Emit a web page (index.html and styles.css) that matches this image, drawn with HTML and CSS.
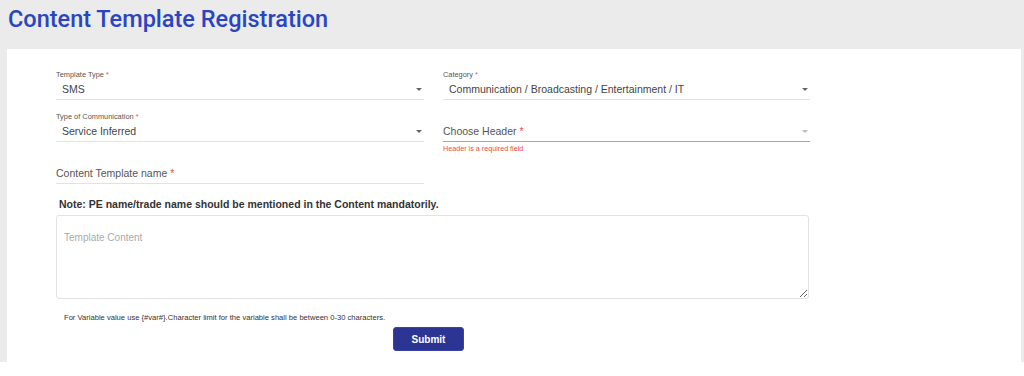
FILE: index.html
```html
<!DOCTYPE html>
<html lang="en">
<head>
    <meta charset="UTF-8">
    <meta name="viewport" content="width=device-width, initial-scale=1.0">
    <title>Content Template Registration</title>
    <link rel="stylesheet" href="styles.css">
</head>
<body>
    <!-- Page Section -->
    <div class="page">
        <h1 class="page-title">Content Template Registration</h1>

        <!-- Form Card -->
        <div class="card">
            <form class="template-form">
                <div class="field-grid">
                    <div class="field">
                        <div class="field-label">Template Type <span class="req">*</span></div>
                        <div class="field-value">
                            <span>SMS</span>
                            <span class="arrow"></span>
                        </div>
                    </div>
                    <div class="field">
                        <div class="field-label">Category <span class="req">*</span></div>
                        <div class="field-value">
                            <span>Communication / Broadcasting / Entertainment / IT</span>
                            <span class="arrow"></span>
                        </div>
                    </div>

                    <div class="field">
                        <div class="field-label">Type of Communication <span class="req">*</span></div>
                        <div class="field-value">
                            <span>Service Inferred</span>
                            <span class="arrow"></span>
                        </div>
                    </div>
                    <div class="field field-error">
                        <div class="field-label"></div>
                        <div class="field-value placeholder value-error">
                            <span>Choose Header <span class="req">*</span></span>
                            <span class="arrow arrow-light"></span>
                        </div>
                        <div class="error-text">Header is a required field</div>
                    </div>

                    <div class="field">
                        <div class="field-label"></div>
                        <div class="field-value placeholder">
                            <span>Content Template name <span class="req">*</span></span>
                        </div>
                    </div>
                </div>

                <p class="note">Note: PE name/trade name should be mentioned in the Content mandatorily.</p>
                <textarea class="template-content" placeholder="Template Content"></textarea>
                <p class="hint">For Variable value use {#var#}.Character limit for the variable shall be between 0-30 characters.</p>
                <button type="button" class="submit-btn">Submit</button>
            </form>
        </div>
    </div>
</body>
</html>
```

FILE: styles.css
```css
/* Base */
body {
    margin: 0;
    padding: 0;
    font-family: 'Liberation Sans', Arial, sans-serif;
    background-color: #fff;
    color: #333;
}

/* Gray page area */
.page {
    background-color: #ebebeb;
    height: 362px;
    padding: 0 3px 0 7px;
    box-sizing: border-box;
    display: flex;
    flex-direction: column;
}

.page-title {
    margin: 0;
    padding: 6px 0 17px 1px;
    font-family: Roboto, 'Liberation Sans', sans-serif;
    font-size: 23.5px;
    line-height: 26px;
    font-weight: 500;
    color: #2a45c2;
}

/* White card */
.card {
    flex: 1;
    background-color: #fff;
}

.template-form {
    padding: 21px 0 11px 49px;
}

/* Select / input rows */
.field-grid {
    display: grid;
    grid-template-columns: 368px 367px;
    column-gap: 19px;
}

.field {
    margin-bottom: 12px;
}

.field-grid .field:last-child {
    margin-bottom: 0;
}

.field-label {
    height: 10px;
    font-size: 7.4px;
    line-height: 10px;
    color: #555;
}

.field-value {
    display: flex;
    justify-content: space-between;
    align-items: center;
    margin-top: 2px;
    padding: 0 2px 3px 6px;
    height: 14px;
    font-size: 10.5px;
    line-height: 14px;
    color: #444;
    border-bottom: 1px solid #e2e2e2;
}

.field-value.placeholder {
    padding-left: 0;
    color: #555;
}

.field-value.value-error {
    border-bottom-color: #f58585;
}

.req {
    color: #f05050;
}

.arrow {
    width: 0;
    height: 0;
    border-left: 3px solid transparent;
    border-right: 3px solid transparent;
    border-top: 3px solid #666;
}

.arrow-light {
    border-top-color: #bbb;
}

.field-error {
    margin-bottom: 0;
}

.error-text {
    margin-top: 2px;
    font-size: 7.2px;
    line-height: 10px;
    color: #f04848;
}

/* Content area */
.note {
    margin: 14px 0 0 3px;
    font-size: 10.5px;
    line-height: 13px;
    font-weight: bold;
    color: #333;
}

.template-content {
    display: block;
    margin-top: 4px;
    width: 753px;
    height: 84px;
    box-sizing: border-box;
    padding: 15px 7px;
    font-family: 'Liberation Sans', Arial, sans-serif;
    font-size: 10px;
    line-height: 13px;
    border: 1px solid #e2e2e2;
    border-radius: 3px;
    outline: none;
}

.template-content::placeholder {
    color: #aaa;
}

.hint {
    margin: 14px 0 0 8px;
    font-size: 7.6px;
    line-height: 10px;
    color: #333;
}

/* Button */
.submit-btn {
    display: block;
    margin: 4px 0 0 337px;
    width: 71px;
    height: 24px;
    padding: 0;
    font-family: 'Liberation Sans', Arial, sans-serif;
    font-size: 10px;
    font-weight: bold;
    color: #fff;
    background-color: #2c3594;
    border: 1px solid #3a44a6;
    border-radius: 3px;
    cursor: pointer;
}
```
